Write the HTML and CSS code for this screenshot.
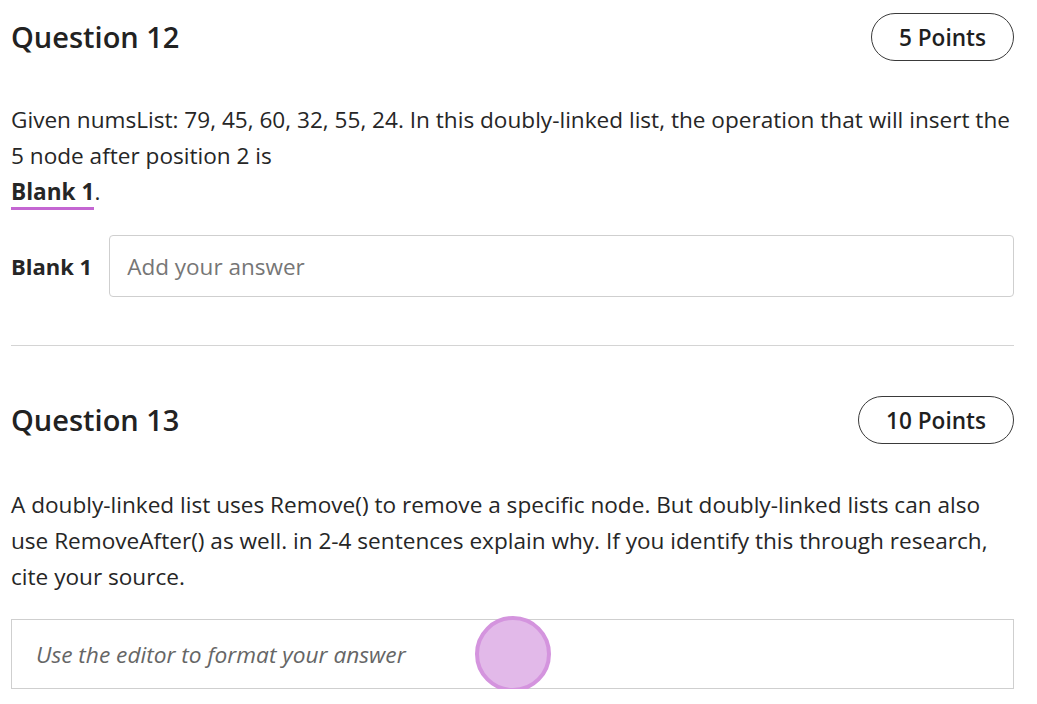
FILE: index.html
```html
<!DOCTYPE html>
<html lang="en">
<head>
<meta charset="utf-8">
<title>Questions</title>
<link rel="stylesheet" href="styles.css">
</head>
<body>
<main class="page">
  <section class="question">
    <header class="q-head">
      <h2 class="q-title">Question 12</h2>
      <span class="points">5 Points</span>
    </header>
    <p class="q-text">Given numsList: 79, 45, 60, 32, 55, 24. In this doubly-linked list, the operation that will insert the 5 node after position 2 is<br><span class="blank-ref">Blank 1</span>.</p>
    <div class="blank-row">
      <span class="blank-label">Blank 1</span>
      <div class="answer-input">Add your answer</div>
    </div>
  </section>
  <hr class="divider">
  <section class="question q13">
    <header class="q-head">
      <h2 class="q-title">Question 13</h2>
      <span class="points">10 Points</span>
    </header>
    <p class="q-text">A doubly-linked list uses Remove() to remove a specific node. But doubly-linked lists can also use RemoveAfter() as well. in 2-4 sentences explain why. If you identify this through research, cite your source.</p>
    <div class="editor">
      <span class="editor-placeholder">Use the editor to format your answer</span>
      <span class="cursor-dot"></span>
    </div>
  </section>
</main>
</body>
</html>
```

FILE: styles.css
```css
html, body {
  margin: 0;
  padding: 0;
  background: #ffffff;
}

body {
  font-family: "Open Sans", "Noto Sans", sans-serif;
  color: #262626;
}

.page {
  padding: 13px 23px 0 11px;
}

.q-head {
  display: flex;
  align-items: center;
  justify-content: space-between;
  height: 48px;
}

.q-title {
  margin: 0;
  font-size: 29px;
  font-weight: 600;
  color: #222222;
  line-height: 1;
  position: relative;
  top: -1px;
}

.points {
  box-sizing: border-box;
  height: 48px;
  display: inline-flex;
  align-items: center;
  padding: 0 27px;
  border: 1px solid #3a3a3a;
  border-radius: 24px;
  font-size: 22.6px;
  font-weight: 550;
  color: #1f1f1f;
}

.q-text {
  margin: 41px 0 0;
  font-size: 22.6px;
  line-height: 36px;
}

.blank-ref {
  font-weight: 700;
  border-bottom: 3px solid #c466d2;
}

.blank-row {
  display: flex;
  align-items: center;
  gap: 17px;
  margin-top: 25px;
}

.blank-label {
  font-size: 22px;
  font-weight: 700;
  white-space: nowrap;
}

.answer-input {
  flex: 1;
  box-sizing: border-box;
  height: 62px;
  display: flex;
  align-items: center;
  padding: 0 17px;
  border: 1px solid #cfcfcf;
  border-radius: 4px;
  font-size: 22.5px;
  color: #767676;
}

.divider {
  margin: 48px 0 0;
  border: 0;
  border-top: 1px solid #d4d4d4;
  height: 0;
}

.q13 {
  margin-top: 50px;
}

.q13 .q-text {
  margin-top: 43px;
}

.editor {
  position: relative;
  box-sizing: border-box;
  height: 70px;
  margin-top: 24px;
  display: flex;
  align-items: center;
  padding: 0 24px;
  border: 1px solid #cfcfcf;
}

.editor-placeholder {
  font-size: 22.7px;
  font-style: italic;
  color: #666666;
}

.cursor-dot {
  position: absolute;
  left: 463px;
  top: -4px;
  width: 76px;
  height: 76px;
  box-sizing: border-box;
  border-radius: 50%;
  background: #e2b9e9;
  border: 4px solid #d494de;
}
```
